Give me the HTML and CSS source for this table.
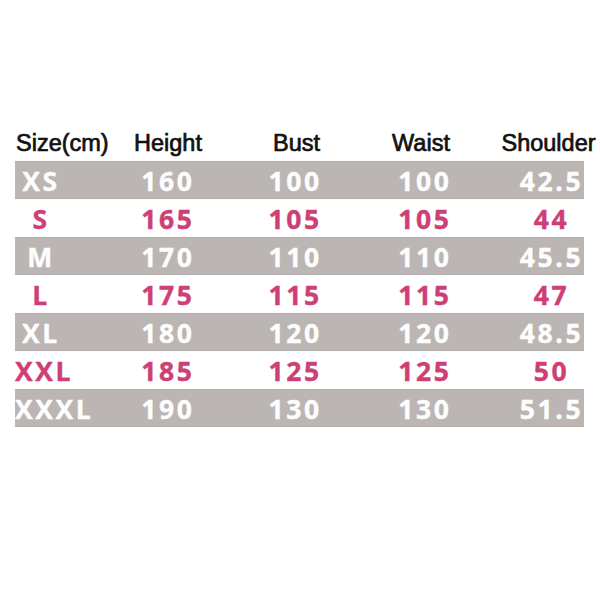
FILE: index.html
```html
<!DOCTYPE html>
<html>
<head>
<meta charset="utf-8">
<link rel="stylesheet" href="styles.css">
</head>
<body>
<div class="chart">
  <div class="head">
    <div class="hc first">Size(cm)</div>
    <div class="hc">Height</div>
    <div class="hc bust">Bust</div>
    <div class="hc waist">Waist</div>
    <div class="hc shoulder">Shoulder</div>
  </div>
  <div class="row gray"><div class="c first">XS</div><div class="c">160</div><div class="c">100</div><div class="c">100</div><div class="c">42.5</div></div>
  <div class="row pink"><div class="c first">S</div><div class="c">165</div><div class="c">105</div><div class="c">105</div><div class="c">44</div></div>
  <div class="row gray"><div class="c first">M</div><div class="c">170</div><div class="c">110</div><div class="c">110</div><div class="c">45.5</div></div>
  <div class="row pink"><div class="c first">L</div><div class="c">175</div><div class="c">115</div><div class="c">115</div><div class="c">47</div></div>
  <div class="row gray"><div class="c first">XL</div><div class="c">180</div><div class="c">120</div><div class="c">120</div><div class="c">48.5</div></div>
  <div class="row pink"><div class="c first">XXL</div><div class="c">185</div><div class="c">125</div><div class="c">125</div><div class="c">50</div></div>
  <div class="row gray"><div class="c first">XXXL</div><div class="c">190</div><div class="c">130</div><div class="c">130</div><div class="c">51.5</div></div>
</div>
</body>
</html>
```
FILE: styles.css
```css
html, body {
  margin: 0;
  padding: 0;
  background: #ffffff;
  width: 600px;
  height: 600px;
  overflow: hidden;
}
.chart {
  padding-top: 126px;
  margin-left: 15px;
  width: 569px;
}
.head, .row {
  display: grid;
  grid-template-columns: 52px 202px 52px 208px 45px;
}
.head {
  height: 35px;
  box-sizing: border-box;
  padding-top: 6px;
}
.hc {
  display: flex;
  justify-content: center;
  white-space: nowrap;
  font-family: "Liberation Sans", Arial, sans-serif;
  font-size: 23.5px;
  line-height: 23px;
  color: #111111;
  -webkit-text-stroke: 0.7px #111111;
}
.hc.first {
  justify-content: flex-start;
  padding-left: 1px;
}
.hc.bust {
  padding-left: 3px;
}
.hc.waist {
  padding-right: 8px;
}
.hc.shoulder {
  padding-right: 6px;
}
.row {
  height: 38px;
  box-sizing: border-box;
  padding-top: 3px;
}
.row.gray {
  background: #bbb5b3;
  color: #fdfdfd;
  box-shadow: inset 0 1px 0 #b1aba9, inset 0 -1px 0 #b1aba9;
}
.row.pink {
  color: #cd3f75;
}
.c {
  display: flex;
  justify-content: center;
  white-space: nowrap;
  font-family: "Open Sans", sans-serif;
  font-weight: 700;
  font-size: 26.5px;
  line-height: 35px;
  letter-spacing: 2.6px;
  -webkit-text-stroke: 0.4px currentColor;
}
.c.first {
  justify-content: safe center;
}
```
